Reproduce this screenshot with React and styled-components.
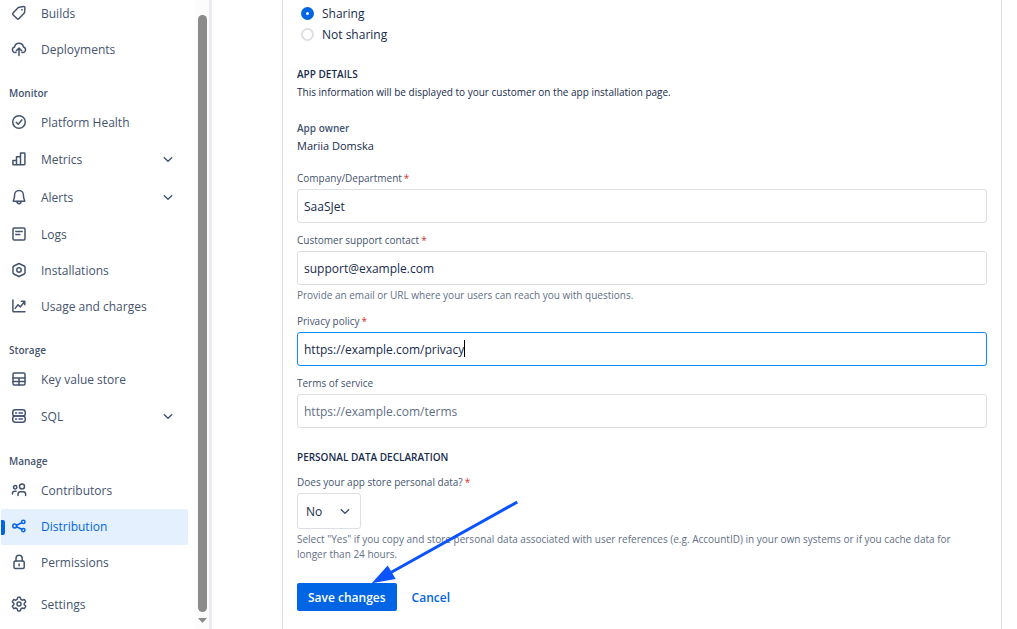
import React, { useLayoutEffect, useState } from 'react';
import styled, { createGlobalStyle, css } from 'styled-components';

const FONT = '"Open Sans", "Noto Sans", sans-serif';

const GlobalStyle = createGlobalStyle`
    * {
        box-sizing: border-box;
    }
    body {
        margin: 0;
        background: #FFF;
        color: #172B4D;
        font-family: ${FONT};
        font-size: 12px;
    }
    input, select, button {
        font-family: inherit;
    }
`;

const Page = styled.div`
    display: flex;
    height: 100vh;
    overflow: hidden;
`;

/* sidebar */

const Sidebar = styled.aside`
    display: flex;
    flex: none;
    width: 212px;
    border-right: 3px solid #EBECF2;
`;

const Nav = styled.nav`
    flex: 1;
    display: flex;
    flex-direction: column;
    justify-content: flex-end;
    overflow: hidden;
    padding: 0 7px 6px 1px;
`;

const NavGroup = styled.div`
    display: flex;
    flex-direction: column;
    flex: none;
`;

const NavHeading = styled.h2`
    margin: 17px 0 4px 8px;
    font-size: 10px;
    line-height: 16px;
    font-weight: 600;
    color: #44546F;
`;

const NavLink = styled.a`
    position: relative;
    display: flex;
    align-items: center;
    gap: 14px;
    height: ${p => (p.$expandable ? 38 : 36)}px;
    margin-top: ${p => (p.$spaced ? 6 : 0)}px;
    padding: 0 14px 0 10px;
    border-radius: 2px;
    color: #44546F;
    text-decoration: none;
    svg {
        flex: none;
        margin-bottom: 2px;
    }
    ${p => p.$active && css`
        background: #E5F0FF;
        color: #0065E5;
        &::before {
            content: '';
            position: absolute;
            left: 0;
            top: 11px;
            width: 4px;
            height: 15px;
            border-radius: 0 2px 2px 0;
            background: #0065E5;
        }
    `}
`;

const NavText = styled.span`
    flex: 1;
    font-size: 12px;
    line-height: 20px;
    white-space: nowrap;
`;

const Scrollbar = styled.div`
    display: flex;
    flex-direction: column;
    align-items: center;
    flex: none;
    width: 14px;
    padding: 15px 0 6px;
    background: #FCFCFC;
`;

const Thumb = styled.div`
    flex: 1;
    width: 9px;
    margin-bottom: 6px;
    border-radius: 5px;
    background: #8B8B8B;
`;

/* form */

const Main = styled.main`
    flex: 1;
    display: flex;
    min-width: 0;
    padding: 0 15px 0 70px;
`;

const Card = styled.form`
    flex: 1;
    min-width: 0;
    padding: 3px 14px 0;
    border: solid #DCDFE4;
    border-width: 0 1px;
`;

const RadioRow = styled.label`
    display: flex;
    align-items: center;
    gap: 8px;
    padding-left: 4px;
    font-size: 12px;
    line-height: 21px;
`;

const Radio = styled.input`
    appearance: none;
    width: 13px;
    height: 13px;
    margin: 0;
    border: 2px solid #DCDFE4;
    border-radius: 50%;
    background: #FFF;
    &:checked {
        border: 5px solid #0065E5;
    }
`;

const SectionTitle = styled.h3`
    margin: 21px 0 0;
    font-size: 10px;
    line-height: 16px;
    font-weight: 600;
`;

const Info = styled.p`
    margin: 2px 0 0;
    font-size: 10px;
    line-height: 16px;
`;

const Owner = styled.dl`
    margin: 20px 0 16px;
    line-height: 16px;
    dt {
        font-size: 10px;
        font-weight: 600;
        color: #44546F;
    }
    dd {
        margin: 2px 0 0;
        font-size: 11px;
    }
`;

const FieldBox = styled.div`
    & + &, ${SectionTitle} + & {
        margin-top: 9px;
    }
`;

const Label = styled.label`
    display: block;
    margin-bottom: 3px;
    font-size: 10px;
    line-height: 16px;
    color: #44546F;
`;

const Star = styled.span`
    padding-left: 2px;
    color: #C9372C;
`;

const Control = styled.div`
    position: relative;
`;

const TextInput = styled.input`
    display: block;
    width: 100%;
    height: 34px;
    padding: 0 6px;
    border: 1px solid ${p => (p.$focused ? '#0A8CFF' : '#DCDFE4')};
    border-radius: 3px;
    outline: none;
    background: #FFF;
    color: #172B4D;
    font-size: 12px;
    caret-color: transparent;
    &::placeholder {
        color: #626F86;
        opacity: 1;
    }
`;

const Caret = styled.span`
    position: absolute;
    top: 8px;
    width: 1px;
    height: 17px;
    background: #000;
`;

const Hint = styled.p`
    max-width: 680px;
    margin: 0;
    padding: 3px 0 1px;
    font-size: 10px;
    line-height: 15px;
    color: #626F86;
`;

const SelectBox = styled.div`
    position: relative;
    width: 64px;
    svg {
        position: absolute;
        right: 10px;
        top: 12px;
        pointer-events: none;
        color: #44546F;
    }
`;

const Select = styled.select`
    appearance: none;
    display: block;
    width: 100%;
    height: 36px;
    padding: 0 8px;
    border: 1px solid #DCDFE4;
    border-radius: 3px;
    background: #FFF;
    color: #172B4D;
    font-size: 12px;
`;

const Actions = styled.div`
    position: relative;
    display: flex;
    gap: 4px;
    margin-top: 20px;
`;

const Button = styled.button`
    height: 28px;
    padding: 0 11px;
    border: 0;
    border-radius: 2px;
    background: ${p => (p.$primary ? '#0065E5' : 'transparent')};
    color: ${p => (p.$primary ? '#FFF' : '#0065E5')};
    font-size: 12px;
    font-weight: 600;
    white-space: nowrap;
`;

const Pointer = styled.svg`
    position: absolute;
    left: 73px;
    top: -85px;
    pointer-events: none;
`;

const ICONS = {
    builds: <path d="M8.2 2.2 12.6 1.6q1.3-.1 1.3 1.2l-.3 4.4q0 .6-.5 1.1l-5.3 5.5q-.8.8-1.6 0L2 9.7q-.8-.8 0-1.6l5.1-5.4q.5-.4 1.1-.5zM11 4.6v.4" />,
    deployments: <path d="M5 11.6H4.2a2.9 2.9 0 0 1-.6-5.7 4.5 4.5 0 0 1 8.8 0 2.9 2.9 0 0 1-.6 5.7H11M8 14.6V7.4M5.3 9.8 8 7.1l2.7 2.7" />,
    health: <><circle cx="8" cy="8" r="6.3" /><path d="m5.2 8.2 2 2 3.7-4.3" /></>,
    metrics: <path d="M1.9 9.5h3.6v4.3H2.6q-.7 0-.7-.7zM5.5 13.8V5.7h4v8.1M9.5 13.8V2h3.8q.6 0 .6.6v10.5q0 .7-.7.7H5.5" />,
    alerts: <><path d="M2.4 11.4c1-1.6 1.2-3 1.2-5.4a4.4 4.4 0 0 1 8.8 0c0 2.4.2 3.8 1.2 5.4q.4.9-.5.9H2.9q-.9 0-.5-.9z" /><path d="M5.9 12.6q.3 2.1 2.1 2.1t2.1-2.1" /></>,
    logs: <><rect x="2" y="2" width="12" height="12" rx="1.2" /><path d="M4.8 5.6h6.4M4.8 8.6h4" /></>,
    installations: <><path d="M8 1.5 13.2 4q.8.4.8 1.2v5.6q0 .8-.8 1.2L8 14.5 2.8 12Q2 11.6 2 10.8V5.2Q2 4.4 2.8 4z" /><circle cx="8" cy="8" r="2.2" /></>,
    usage: <path d="M1.9 2v10.9q0 .8.8.8H14M4.2 10.4l2.8-3.7 2.4 2.2 4.2-5.4M10.3 3.2h3.5v3.5" />,
    table: <><rect x="2" y="2" width="12" height="12" rx="1.2" /><path d="M2 7h12M2 10.5h12M8 7v7" /></>,
    sql: <><rect x="1.7" y="1.8" width="12.6" height="6.2" rx="2.6" /><rect x="1.7" y="8" width="12.6" height="6.2" rx="2.6" /><path d="M4.6 4.9h1M8 4.9h3.4M4.6 11.1h1M8 11.1h3.4" /></>,
    people: <><circle cx="4.2" cy="5.3" r="1.7" /><circle cx="11" cy="4.5" r="2.5" /><path d="M1.5 12v-.8q0-2 2-2h1.6M7 13.5v-1.3q0-2.5 2.5-2.5h2.7q2.4 0 2.4 2.5v1.3" /></>,
    share: <><circle cx="3.7" cy="8" r="1.9" /><circle cx="12.3" cy="3.9" r="1.7" /><circle cx="12.3" cy="12.1" r="1.7" /><path d="m5.5 7.2 5.2-2.5M5.5 8.8l5.2 2.5" /></>,
    lock: <><rect x="3" y="7" width="10.2" height="7.5" rx="1.2" /><path d="M5 7V4.4a3 3 0 0 1 6.2 0V7M8.1 10v1.7" /></>,
    settings: <><path d="m6.6 1.7-.4 1.7-1.4.8-1.7-.6q-.5-.1-.7.3L1.5 5.6q-.3.4.1.7L2.9 7.5v1.2L1.6 9.8q-.4.3-.1.8l1 1.6q.2.5.7.3l1.6-.5 1.4.8.4 1.6q.1.5.6.5h1.7q.5 0 .6-.5l.4-1.6 1.4-.8 1.6.5q.5.2.7-.3l1-1.6q.2-.5-.1-.8l-1.3-1.1V7.5l1.3-1.2q.3-.3.1-.7l-1-1.7q-.2-.4-.7-.3l-1.7.6-1.4-.8-.4-1.7q-.1-.5-.6-.5H7.2q-.5 0-.6.5z" /><circle cx="8" cy="8" r="2" /></>,
};

const Icon = ({ name }) => (
    <svg width="16" height="16" viewBox="0 0 16 16" fill="none" stroke="currentColor" strokeWidth="1.5" strokeLinecap="round" strokeLinejoin="round" aria-hidden="true">
        {ICONS[name]}
    </svg>
);

const Chevron = () => (
    <svg width="12" height="12" viewBox="0 0 12 12" fill="none" stroke="currentColor" strokeWidth="1.4" aria-hidden="true">
        <path d="m1.8 4.2 4.2 4 4.2-4" />
    </svg>
);

const groups = [
    {
        items: [
            { icon: 'builds', text: 'Builds' },
            { icon: 'deployments', text: 'Deployments' },
        ],
    },
    {
        heading: 'Monitor',
        items: [
            { icon: 'health', text: 'Platform Health' },
            { icon: 'metrics', text: 'Metrics', expandable: true },
            { icon: 'alerts', text: 'Alerts', expandable: true },
            { icon: 'logs', text: 'Logs' },
            { icon: 'installations', text: 'Installations' },
            { icon: 'usage', text: 'Usage and charges' },
        ],
    },
    {
        heading: 'Storage',
        items: [
            { icon: 'table', text: 'Key value store' },
            { icon: 'sql', text: 'SQL', expandable: true },
        ],
    },
    {
        heading: 'Manage',
        items: [
            { icon: 'people', text: 'Contributors' },
            { icon: 'share', text: 'Distribution', active: true },
            { icon: 'lock', text: 'Permissions' },
            { icon: 'settings', text: 'Settings', spaced: true },
        ],
    },
];

const Field = ({ id, label, required, hint, focused, initial = '', placeholder }) => {
    const [value, setValue] = useState(initial);
    const [caretX, setCaretX] = useState(0);

    // the caret stands right after the typed text
    useLayoutEffect(() => {
        if (!focused) return;
        const ctx = document.createElement('canvas').getContext('2d');
        ctx.font = `12px ${FONT}`;
        setCaretX(Math.round(7 + ctx.measureText(value).width));
    }, [focused, value]);

    return (
        <FieldBox>
            <Label htmlFor={id}>{label}{required && <Star>*</Star>}</Label>
            <Control>
                <TextInput
                    id={id}
                    type="text"
                    $focused={focused}
                    placeholder={placeholder}
                    value={value}
                    onChange={e => setValue(e.target.value)}
                />
                {focused && <Caret style={{ left: caretX }} />}
            </Control>
            {hint && <Hint>{hint}</Hint>}
        </FieldBox>
    );
};

const App = () => {
    const [sharing, setSharing] = useState(true);
    return (
        <Page>
            <GlobalStyle />
            <Sidebar>
                <Nav>
                    {groups.map((group, i) => (
                        <NavGroup key={i}>
                            {group.heading && <NavHeading>{group.heading}</NavHeading>}
                            {group.items.map(item => (
                                <NavLink key={item.text} href="#" $active={item.active} $expandable={item.expandable} $spaced={item.spaced}>
                                    <Icon name={item.icon} />
                                    <NavText>{item.text}</NavText>
                                    {item.expandable && <Chevron />}
                                </NavLink>
                            ))}
                        </NavGroup>
                    ))}
                </Nav>
                <Scrollbar>
                    <Thumb />
                    <svg width="9" height="5" viewBox="0 0 9 5" aria-hidden="true">
                        <path d="M0 0h9L4.5 5z" fill="#8B8B8B" />
                    </svg>
                </Scrollbar>
            </Sidebar>
            <Main>
                <Card onSubmit={e => e.preventDefault()}>
                    <RadioRow>
                        <Radio type="radio" name="sharing" checked={sharing} onChange={() => setSharing(true)} />
                        Sharing
                    </RadioRow>
                    <RadioRow>
                        <Radio type="radio" name="sharing" checked={!sharing} onChange={() => setSharing(false)} />
                        Not sharing
                    </RadioRow>

                    <SectionTitle>APP DETAILS</SectionTitle>
                    <Info>This information will be displayed to your customer on the app installation page.</Info>
                    <Owner>
                        <dt>App owner</dt>
                        <dd>Mariia Domska</dd>
                    </Owner>
                    <Field id="company" label="Company/Department" required initial="SaaSJet" />
                    <Field
                        id="contact"
                        label="Customer support contact"
                        required
                        initial="support@example.com"
                        hint="Provide an email or URL where your users can reach you with questions."
                    />
                    <Field id="privacy" label="Privacy policy" required focused initial="https://example.com/privacy" />
                    <Field id="terms" label="Terms of service" placeholder="https://example.com/terms" />

                    <SectionTitle>PERSONAL DATA DECLARATION</SectionTitle>
                    <FieldBox>
                        <Label htmlFor="personal">Does your app store personal data?<Star>*</Star></Label>
                        <SelectBox>
                            <Select id="personal" defaultValue="No">
                                <option>No</option>
                                <option>Yes</option>
                            </Select>
                            <Chevron />
                        </SelectBox>
                        <Hint>
                            Select "Yes" if you copy and store personal data associated with user references (e.g. AccountID) in your own systems or if you cache data for longer than 24 hours.
                        </Hint>
                    </FieldBox>
                    <Actions>
                        <Button type="submit" $primary>Save changes</Button>
                        <Button type="button">Cancel</Button>
                        <Pointer width="150" height="90" viewBox="0 0 150 90" aria-hidden="true">
                            <path d="M147.3 4 20 75" stroke="#0A53FF" strokeWidth="3" />
                            <path d="M1.7 85.3 17.7 67.5 25.7 81z" fill="#0A53FF" />
                        </Pointer>
                    </Actions>
                </Card>
            </Main>
        </Page>
    );
};

export default App;
